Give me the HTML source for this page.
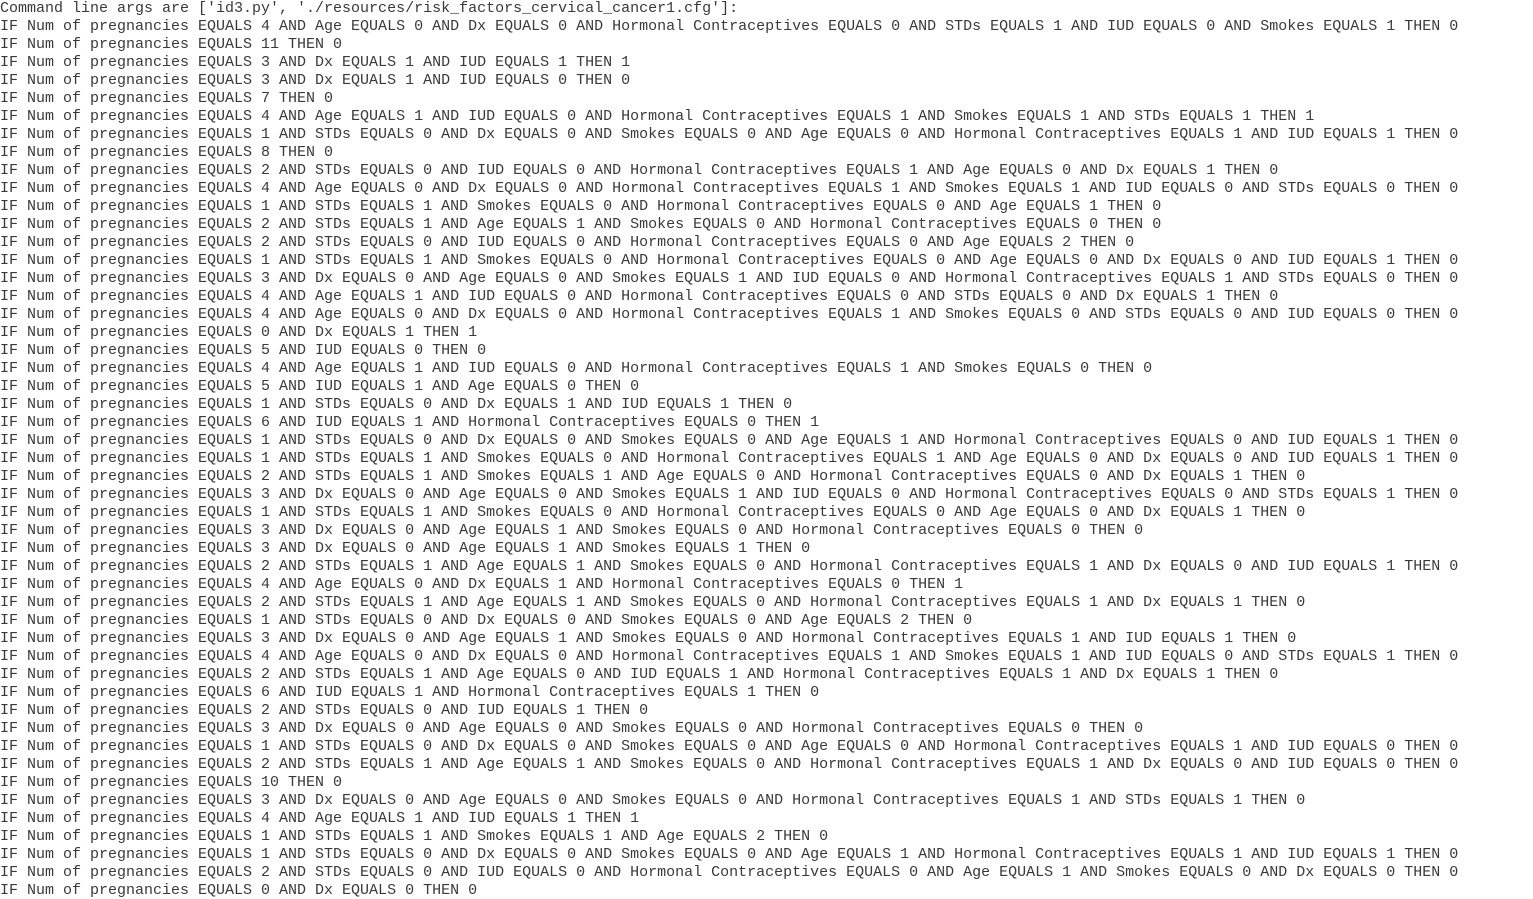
<!DOCTYPE html>
<html><head><meta charset="utf-8"><style>
html,body{margin:0;padding:0;background:#fff;width:1533px;height:899px;overflow:hidden}
pre{margin:0;padding:0;font-family:"Liberation Mono","DejaVu Sans Mono",monospace;font-size:15px;line-height:18px;color:#3a3a3a;white-space:pre}
</style></head><body><pre>Command line args are ['id3.py', './resources/risk_factors_cervical_cancer1.cfg']:
IF Num of pregnancies EQUALS 4 AND Age EQUALS 0 AND Dx EQUALS 0 AND Hormonal Contraceptives EQUALS 0 AND STDs EQUALS 1 AND IUD EQUALS 0 AND Smokes EQUALS 1 THEN 0
IF Num of pregnancies EQUALS 11 THEN 0
IF Num of pregnancies EQUALS 3 AND Dx EQUALS 1 AND IUD EQUALS 1 THEN 1
IF Num of pregnancies EQUALS 3 AND Dx EQUALS 1 AND IUD EQUALS 0 THEN 0
IF Num of pregnancies EQUALS 7 THEN 0
IF Num of pregnancies EQUALS 4 AND Age EQUALS 1 AND IUD EQUALS 0 AND Hormonal Contraceptives EQUALS 1 AND Smokes EQUALS 1 AND STDs EQUALS 1 THEN 1
IF Num of pregnancies EQUALS 1 AND STDs EQUALS 0 AND Dx EQUALS 0 AND Smokes EQUALS 0 AND Age EQUALS 0 AND Hormonal Contraceptives EQUALS 1 AND IUD EQUALS 1 THEN 0
IF Num of pregnancies EQUALS 8 THEN 0
IF Num of pregnancies EQUALS 2 AND STDs EQUALS 0 AND IUD EQUALS 0 AND Hormonal Contraceptives EQUALS 1 AND Age EQUALS 0 AND Dx EQUALS 1 THEN 0
IF Num of pregnancies EQUALS 4 AND Age EQUALS 0 AND Dx EQUALS 0 AND Hormonal Contraceptives EQUALS 1 AND Smokes EQUALS 1 AND IUD EQUALS 0 AND STDs EQUALS 0 THEN 0
IF Num of pregnancies EQUALS 1 AND STDs EQUALS 1 AND Smokes EQUALS 0 AND Hormonal Contraceptives EQUALS 0 AND Age EQUALS 1 THEN 0
IF Num of pregnancies EQUALS 2 AND STDs EQUALS 1 AND Age EQUALS 1 AND Smokes EQUALS 0 AND Hormonal Contraceptives EQUALS 0 THEN 0
IF Num of pregnancies EQUALS 2 AND STDs EQUALS 0 AND IUD EQUALS 0 AND Hormonal Contraceptives EQUALS 0 AND Age EQUALS 2 THEN 0
IF Num of pregnancies EQUALS 1 AND STDs EQUALS 1 AND Smokes EQUALS 0 AND Hormonal Contraceptives EQUALS 0 AND Age EQUALS 0 AND Dx EQUALS 0 AND IUD EQUALS 1 THEN 0
IF Num of pregnancies EQUALS 3 AND Dx EQUALS 0 AND Age EQUALS 0 AND Smokes EQUALS 1 AND IUD EQUALS 0 AND Hormonal Contraceptives EQUALS 1 AND STDs EQUALS 0 THEN 0
IF Num of pregnancies EQUALS 4 AND Age EQUALS 1 AND IUD EQUALS 0 AND Hormonal Contraceptives EQUALS 0 AND STDs EQUALS 0 AND Dx EQUALS 1 THEN 0
IF Num of pregnancies EQUALS 4 AND Age EQUALS 0 AND Dx EQUALS 0 AND Hormonal Contraceptives EQUALS 1 AND Smokes EQUALS 0 AND STDs EQUALS 0 AND IUD EQUALS 0 THEN 0
IF Num of pregnancies EQUALS 0 AND Dx EQUALS 1 THEN 1
IF Num of pregnancies EQUALS 5 AND IUD EQUALS 0 THEN 0
IF Num of pregnancies EQUALS 4 AND Age EQUALS 1 AND IUD EQUALS 0 AND Hormonal Contraceptives EQUALS 1 AND Smokes EQUALS 0 THEN 0
IF Num of pregnancies EQUALS 5 AND IUD EQUALS 1 AND Age EQUALS 0 THEN 0
IF Num of pregnancies EQUALS 1 AND STDs EQUALS 0 AND Dx EQUALS 1 AND IUD EQUALS 1 THEN 0
IF Num of pregnancies EQUALS 6 AND IUD EQUALS 1 AND Hormonal Contraceptives EQUALS 0 THEN 1
IF Num of pregnancies EQUALS 1 AND STDs EQUALS 0 AND Dx EQUALS 0 AND Smokes EQUALS 0 AND Age EQUALS 1 AND Hormonal Contraceptives EQUALS 0 AND IUD EQUALS 1 THEN 0
IF Num of pregnancies EQUALS 1 AND STDs EQUALS 1 AND Smokes EQUALS 0 AND Hormonal Contraceptives EQUALS 1 AND Age EQUALS 0 AND Dx EQUALS 0 AND IUD EQUALS 1 THEN 0
IF Num of pregnancies EQUALS 2 AND STDs EQUALS 1 AND Smokes EQUALS 1 AND Age EQUALS 0 AND Hormonal Contraceptives EQUALS 0 AND Dx EQUALS 1 THEN 0
IF Num of pregnancies EQUALS 3 AND Dx EQUALS 0 AND Age EQUALS 0 AND Smokes EQUALS 1 AND IUD EQUALS 0 AND Hormonal Contraceptives EQUALS 0 AND STDs EQUALS 1 THEN 0
IF Num of pregnancies EQUALS 1 AND STDs EQUALS 1 AND Smokes EQUALS 0 AND Hormonal Contraceptives EQUALS 0 AND Age EQUALS 0 AND Dx EQUALS 1 THEN 0
IF Num of pregnancies EQUALS 3 AND Dx EQUALS 0 AND Age EQUALS 1 AND Smokes EQUALS 0 AND Hormonal Contraceptives EQUALS 0 THEN 0
IF Num of pregnancies EQUALS 3 AND Dx EQUALS 0 AND Age EQUALS 1 AND Smokes EQUALS 1 THEN 0
IF Num of pregnancies EQUALS 2 AND STDs EQUALS 1 AND Age EQUALS 1 AND Smokes EQUALS 0 AND Hormonal Contraceptives EQUALS 1 AND Dx EQUALS 0 AND IUD EQUALS 1 THEN 0
IF Num of pregnancies EQUALS 4 AND Age EQUALS 0 AND Dx EQUALS 1 AND Hormonal Contraceptives EQUALS 0 THEN 1
IF Num of pregnancies EQUALS 2 AND STDs EQUALS 1 AND Age EQUALS 1 AND Smokes EQUALS 0 AND Hormonal Contraceptives EQUALS 1 AND Dx EQUALS 1 THEN 0
IF Num of pregnancies EQUALS 1 AND STDs EQUALS 0 AND Dx EQUALS 0 AND Smokes EQUALS 0 AND Age EQUALS 2 THEN 0
IF Num of pregnancies EQUALS 3 AND Dx EQUALS 0 AND Age EQUALS 1 AND Smokes EQUALS 0 AND Hormonal Contraceptives EQUALS 1 AND IUD EQUALS 1 THEN 0
IF Num of pregnancies EQUALS 4 AND Age EQUALS 0 AND Dx EQUALS 0 AND Hormonal Contraceptives EQUALS 1 AND Smokes EQUALS 1 AND IUD EQUALS 0 AND STDs EQUALS 1 THEN 0
IF Num of pregnancies EQUALS 2 AND STDs EQUALS 1 AND Age EQUALS 0 AND IUD EQUALS 1 AND Hormonal Contraceptives EQUALS 1 AND Dx EQUALS 1 THEN 0
IF Num of pregnancies EQUALS 6 AND IUD EQUALS 1 AND Hormonal Contraceptives EQUALS 1 THEN 0
IF Num of pregnancies EQUALS 2 AND STDs EQUALS 0 AND IUD EQUALS 1 THEN 0
IF Num of pregnancies EQUALS 3 AND Dx EQUALS 0 AND Age EQUALS 0 AND Smokes EQUALS 0 AND Hormonal Contraceptives EQUALS 0 THEN 0
IF Num of pregnancies EQUALS 1 AND STDs EQUALS 0 AND Dx EQUALS 0 AND Smokes EQUALS 0 AND Age EQUALS 0 AND Hormonal Contraceptives EQUALS 1 AND IUD EQUALS 0 THEN 0
IF Num of pregnancies EQUALS 2 AND STDs EQUALS 1 AND Age EQUALS 1 AND Smokes EQUALS 0 AND Hormonal Contraceptives EQUALS 1 AND Dx EQUALS 0 AND IUD EQUALS 0 THEN 0
IF Num of pregnancies EQUALS 10 THEN 0
IF Num of pregnancies EQUALS 3 AND Dx EQUALS 0 AND Age EQUALS 0 AND Smokes EQUALS 0 AND Hormonal Contraceptives EQUALS 1 AND STDs EQUALS 1 THEN 0
IF Num of pregnancies EQUALS 4 AND Age EQUALS 1 AND IUD EQUALS 1 THEN 1
IF Num of pregnancies EQUALS 1 AND STDs EQUALS 1 AND Smokes EQUALS 1 AND Age EQUALS 2 THEN 0
IF Num of pregnancies EQUALS 1 AND STDs EQUALS 0 AND Dx EQUALS 0 AND Smokes EQUALS 0 AND Age EQUALS 1 AND Hormonal Contraceptives EQUALS 1 AND IUD EQUALS 1 THEN 0
IF Num of pregnancies EQUALS 2 AND STDs EQUALS 0 AND IUD EQUALS 0 AND Hormonal Contraceptives EQUALS 0 AND Age EQUALS 1 AND Smokes EQUALS 0 AND Dx EQUALS 0 THEN 0
IF Num of pregnancies EQUALS 0 AND Dx EQUALS 0 THEN 0
</pre></body></html>
